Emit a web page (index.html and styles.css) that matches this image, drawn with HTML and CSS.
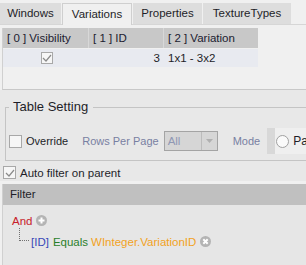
FILE: index.html
```html
<!DOCTYPE html>
<html>
<head>
<meta charset="utf-8">
<link rel="stylesheet" href="styles.css">
</head>
<body>
<div class="page">
  <div class="tabs">
    <div class="tab t1">Windows</div>
    <div class="tab active t2">Variations</div>
    <div class="tab t3">Properties</div>
    <div class="tab t4">TextureTypes</div>
  </div>
  <div class="grid">
    <div class="grid-head">
      <div class="hcell c1">[ 0 ] Visibility</div>
      <div class="hcell c2">[ 1 ] ID</div>
      <div class="hcell c3">[ 2 ] Variation</div>
    </div>
    <div class="grid-row">
      <div class="cell c1 center"><span class="chk checked small"><svg width="10" height="8" viewBox="0 0 10 8"><path d="M1 4 L4 7 L9 1" fill="none" stroke="#8a8a8a" stroke-width="1.2"/></svg></span></div>
      <div class="cell c2 right">3</div>
      <div class="cell c3">1x1 - 3x2</div>
    </div>
  </div>
  <div class="settings">
    <fieldset class="group">
      <legend>Table Setting</legend>
      <div class="group-row">
        <span class="chk"></span>
        <span class="lbl">Override</span>
        <span class="muted rows">Rows Per Page</span>
        <span class="combo"><span class="combo-text">All</span><span class="combo-btn"><svg width="7" height="4" viewBox="0 0 7 4"><path d="M0 0 H7 L3.5 4 Z" fill="#b0b0b0"/></svg></span></span>
        <span class="muted mode">Mode</span>
        <span class="mode-box"><span class="mode-inner"><span class="radio"></span><span class="lbl">Pa</span></span></span>
      </div>
    </fieldset>
  </div>
  <div class="auto">
    <span class="chk checked"><svg width="10" height="8" viewBox="0 0 10 8"><path d="M1 4 L4 7 L9 1" fill="none" stroke="#8a8a8a" stroke-width="1.2"/></svg></span>
    <span class="lbl">Auto filter on parent</span>
  </div>
  <div class="filter">
    <div class="filter-head">Filter</div>
    <div class="filter-body">
      <div class="frow">
        <span class="and">And</span>
        <svg class="icon" width="11" height="11" viewBox="0 0 11 11"><circle cx="5.5" cy="5.5" r="5.5" fill="#b4b4b4"/><path d="M5.5 2.5 V8.5 M2.5 5.5 H8.5" stroke="#fff" stroke-width="2"/></svg>
      </div>
      <div class="frow child">
        <span class="branch"></span>
        <span class="fid">[ID]</span>
        <span class="feq">Equals</span>
        <span class="fval">WInteger.VariationID</span>
        <svg class="icon" width="11" height="11" viewBox="0 0 11 11"><circle cx="5.5" cy="5.5" r="5.5" fill="#b4b4b4"/><path d="M3.3 3.3 L7.7 7.7 M7.7 3.3 L3.3 7.7" stroke="#fff" stroke-width="2"/></svg>
      </div>
    </div>
  </div>
</div>
</body>
</html>
```
FILE: styles.css
```css
html, body {
  margin: 0;
  padding: 0;
}
body {
  width: 306px;
  height: 265px;
  overflow: hidden;
  background: #f0f0f0;
  font-family: "Liberation Sans", Arial, sans-serif;
  font-size: 11px;
  color: #1e1e28;
}
.page {
  display: flex;
  flex-direction: column;
  height: 265px;
}
.tabs {
  display: flex;
  gap: 1px;
  padding-top: 3px;
  height: 25px;
  border-bottom: 1px solid #d6d6d6;
  box-sizing: border-box;
  align-items: stretch;
}
.tab {
  background: #dddddd;
  height: 21px;
  line-height: 21px;
  text-align: center;
  box-sizing: border-box;
  font-size: 11.5px;
  white-space: nowrap;
}
.tab.active {
  background: #f0f0f0;
  border: 1px solid #cfcfcf;
  border-bottom: none;
  height: 22px;
  line-height: 20px;
}
.t1 { width: 61px; }
.t2 { width: 70px; }
.t3 { width: 69px; }
.t4 { width: 88px; }

.grid {
  margin: 3px 0 0 2px;
  height: 62px;
  border-left: 1px solid #d0d0d0;
  border-bottom: 1px solid #c8c8c8;
  box-sizing: border-box;
  background: #f0f0f0;
}
.grid-head, .grid-row {
  display: flex;
  width: 255px;
}
.grid-head {
  background: #c8c8c8;
  height: 20px;
}
.grid-row {
  background: #e8eaf0;
  height: 18px;
  margin-top: 1px;
}
.hcell, .cell {
  box-sizing: border-box;
  display: flex;
  align-items: center;
  font-size: 11.5px;
  white-space: nowrap;
}
.hcell {
  padding-left: 4px;
  border-right: 1px solid #d8d8d8;
  color: #202030;
}
.hcell.c3 { border-right: none; }
.c1 { width: 86px; }
.c2 { width: 75px; }
.c3 { width: 94px; }
.cell.center { justify-content: center; padding-left: 2px; }
.cell.right { justify-content: flex-end; padding-right: 4px; }
.cell.c3 { padding-left: 4px; }

.chk {
  width: 13px;
  height: 13px;
  box-sizing: border-box;
  border: 1px solid #a8a8a8;
  background: #f6f6f6;
  display: inline-flex;
  align-items: center;
  justify-content: center;
  flex: none;
}
.chk.small { width: 12px; height: 12px; }

.settings {
  background: #e8e8e8;
  padding: 10px 0 2px 5px;
}
.group {
  margin: 0;
  padding: 0 0 0 3px;
  border: 1px solid #c4c4c4;
  border-right: none;
  height: 61px;
  box-sizing: border-box;
  min-width: 0;
  overflow: hidden;
}
.group legend {
  font-size: 13px;
  padding: 0 5px 0 4px;
  margin-left: 0;
  color: #1e1e28;
  line-height: 14px;
  white-space: nowrap;
}
.group-row {
  display: flex;
  align-items: center;
  margin-top: 14px;
  height: 26px;
  white-space: nowrap;
}
.group-row > * { flex: none; }
.lbl {
  margin-left: 4px;
  font-size: 11px;
  white-space: nowrap;
}
.muted {
  color: #7880a2;
  font-size: 11px;
}
.rows { margin-left: 14px; }
.combo {
  margin-left: 5px;
  width: 54px;
  height: 20px;
  box-sizing: border-box;
  border: 1px solid #a4a4a4;
  background: #d6d6d6;
  display: flex;
}
.combo-text {
  flex: 1;
  color: #9098b4;
  padding-left: 3px;
  line-height: 18px;
  font-size: 11.5px;
}
.combo-btn {
  width: 15px;
  border-left: 1px solid #bcbcbc;
  display: flex;
  align-items: center;
  justify-content: center;
}
.mode { margin-left: 15px; }
.group-row > .mode-box {
  margin-left: 7px;
  background: #d8d8d8;
  height: 26px;
  flex: 1 0 auto;
  padding-left: 8px;
  display: flex;
}
.mode-inner {
  background: #efefef;
  flex: 1;
  display: flex;
  align-items: center;
  padding-left: 1px;
}
.mode-inner .lbl { font-size: 12px; margin-left: 4px; }
.radio {
  width: 13px;
  height: 13px;
  border-radius: 50%;
  border: 1px solid #a0a0a0;
  background: #fafafa;
  box-sizing: border-box;
  flex: none;
}

.auto {
  background: #e8e8e8;
  display: flex;
  align-items: center;
  padding: 1px 0 0 3px;
  height: 17px;
}
.auto .lbl { font-size: 11.5px; }

.filter {
  margin-left: 2px;
  border-left: 1px solid #d0d0d0;
  flex: 1;
  display: flex;
  flex-direction: column;
  background: #e6e6e6;
  margin-top: 3px;
}
.filter-head {
  background: #c0c0c0;
  height: 21px;
  line-height: 21px;
  padding-left: 7px;
  font-size: 11.5px;
}
.filter-body {
  flex: 1;
  padding: 9px 0 0 9px;
}
.frow {
  display: flex;
  align-items: center;
  height: 13px;
  font-size: 11.5px;
  gap: 4px;
  white-space: nowrap;
}
.frow.child {
  margin-top: 8px;
  padding-left: 7px;
}
.branch {
  width: 10px;
  height: 13px;
  margin-top: -14px;
  border-left: 1px dotted #707070;
  border-bottom: 1px dotted #707070;
  box-sizing: border-box;
  margin-right: -2px;
}
.and { color: #c8202a; }
.fid { color: #3848b8; }
.feq { color: #2a7f2a; }
.fval { color: #f2a21e; margin-left: -1px; }
.icon { flex: none; }
```
